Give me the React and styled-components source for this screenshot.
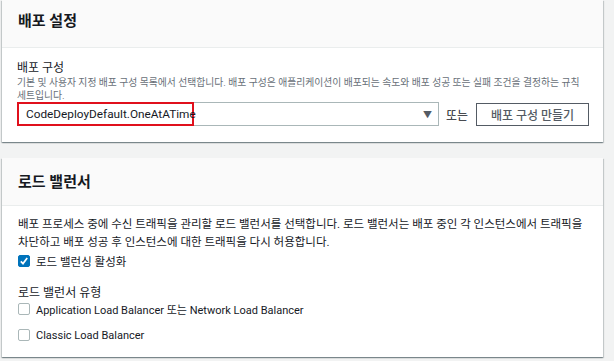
import React from 'react';
import styled, { createGlobalStyle } from 'styled-components';

const GlobalStyle = createGlobalStyle`
    body {
        margin: 0;
        background: #f2f3f3;
        font-family: Roboto, "Noto Sans CJK KR", sans-serif;
        color: #16191f;
        word-break: keep-all;
    }
`;

const Page = styled.div`
    display: flex;
    flex-direction: column;
    gap: 16px;
    padding: 0 11px 2px 2px;
`;

const Panel = styled.section`
    background: #fff;
    box-shadow: 0 1px 1px 0 rgba(0, 28, 36, 0.3), 1px 1px 1px 0 rgba(0, 28, 36, 0.15), -1px 1px 1px 0 rgba(0, 28, 36, 0.15);
`;

const PanelHeader = styled.header`
    height: ${p => p.$height}px;
    display: flex;
    align-items: ${p => (p.$top ? 'flex-start' : 'center')};
    padding: ${p => (p.$top ? '11px' : '0')} 16px 0;
    box-sizing: border-box;
    background: #fafafa;
    border-bottom: 1px solid #eaeded;
`;

const Title = styled.h2`
    margin: 0;
    font-size: 15px;
    font-weight: 700;
    line-height: 20px;
`;

const PanelBody = styled.div`
    padding: ${p => p.$pad};
`;

const Label = styled.div`
    font-size: 12px;
    line-height: 16px;
    margin-top: ${p => p.$mt || 0}px;
`;

const Hint = styled.p`
    margin: 0;
    font-size: 9.8px;
    line-height: 13px;
    color: #687078;
`;

const Text = styled.p`
    margin: 0;
    font-size: 11.5px;
    line-height: 18px;
`;

const Row = styled.div`
    display: flex;
    align-items: center;
    height: 24px;
`;

const Select = styled.div`
    position: relative;
    flex: 1;
    height: 24px;
    box-sizing: border-box;
    border: 1px solid #aab7b8;
    display: flex;
    align-items: center;
    justify-content: flex-end;
    padding-right: 6px;
`;

// red annotation box drawn over the select value
const Highlight = styled.div`
    position: absolute;
    left: -1px;
    top: -1px;
    width: 177px;
    height: 24px;
    box-sizing: border-box;
    border: 2px solid #e0101c;
    display: flex;
    align-items: center;
    padding-left: 7px;
    font-size: 11.8px;
    color: #16191f;
`;

const Arrow = styled.span`
    font-size: 9px;
    color: #545b64;
`;

const Or = styled.span`
    font-size: 12px;
    margin: 0 8px 0 7px;
`;

const Button = styled.button`
    width: 113px;
    height: 23px;
    background: #fff;
    border: 1px solid #545b64;
    font-family: inherit;
    font-size: 12px;
    font-weight: 500;
    color: #545b64;
    padding: 0;
`;

const Check = styled.label`
    display: flex;
    align-items: center;
    gap: 6px;
    font-size: ${p => p.$fs}px;
    height: ${p => p.$h}px;
    margin-top: ${p => p.$mt || 0}px;
`;

const Box = styled.span`
    width: 12px;
    height: 12px;
    box-sizing: border-box;
    border-radius: 2px;
    border: 1px solid ${p => (p.$on ? '#0073bb' : '#aab7b8')};
    background: ${p => (p.$on ? '#0073bb' : '#fff')};
    display: flex;
    align-items: center;
    justify-content: center;
`;

const Checkbox = ({checked, children, h, mt, fs = 11.5}) => (
    <Check $h={h} $mt={mt} $fs={fs}>
        <Box $on={checked}>
            {checked && (
                <svg width="10" height="10" viewBox="0 0 10 10">
                    <path d="M1.8 5.3 L4 7.6 L8.2 2" stroke="#fff" strokeWidth="1.7" fill="none" />
                </svg>
            )}
        </Box>
        <span>{children}</span>
    </Check>
);

const App = () => {
    return (
        <>
            <GlobalStyle />
            <Page>
                <Panel>
                    <PanelHeader $height={48} $top>
                        <Title>배포 설정</Title>
                    </PanelHeader>
                    <PanelBody $pad="12px 14px 16px 15px">
                        <Label>배포 구성</Label>
                        <Hint>기본 및 사용자 지정 배포 구성 목록에서 선택합니다. 배포 구성은 애플리케이션이 배포되는 속도와 배포 성공 또는 실패 조건을 결정하는 규칙 세트입니다.</Hint>
                        <Row>
                            <Select>
                                <Highlight>CodeDeployDefault.OneAtATime</Highlight>
                                <Arrow>▼</Arrow>
                            </Select>
                            <Or>또는</Or>
                            <Button>배포 구성 만들기</Button>
                        </Row>
                    </PanelBody>
                </Panel>

                <Panel>
                    <PanelHeader $height={48}>
                        <Title>로드 밸런서</Title>
                    </PanelHeader>
                    <PanelBody $pad="9px 14px 13px 16px">
                        <Text>배포 프로세스 중에 수신 트래픽을 관리할 로드 밸런서를 선택합니다. 로드 밸런서는 배포 중인 각 인스턴스에서 트래픽을 차단하고 배포 성공 후 인스턴스에 대한 트래픽을 다시 허용합니다.</Text>
                        <Checkbox checked h={20}>로드 밸런싱 활성화</Checkbox>
                        <Label $mt={14}>로드 밸런서 유형</Label>
                        <Checkbox h={16} fs={11}>Application Load Balancer 또는 Network Load Balancer</Checkbox>
                        <Checkbox h={18} mt={9} fs={11}>Classic Load Balancer</Checkbox>
                    </PanelBody>
                </Panel>
            </Page>
        </>
    );
};

export default App;
